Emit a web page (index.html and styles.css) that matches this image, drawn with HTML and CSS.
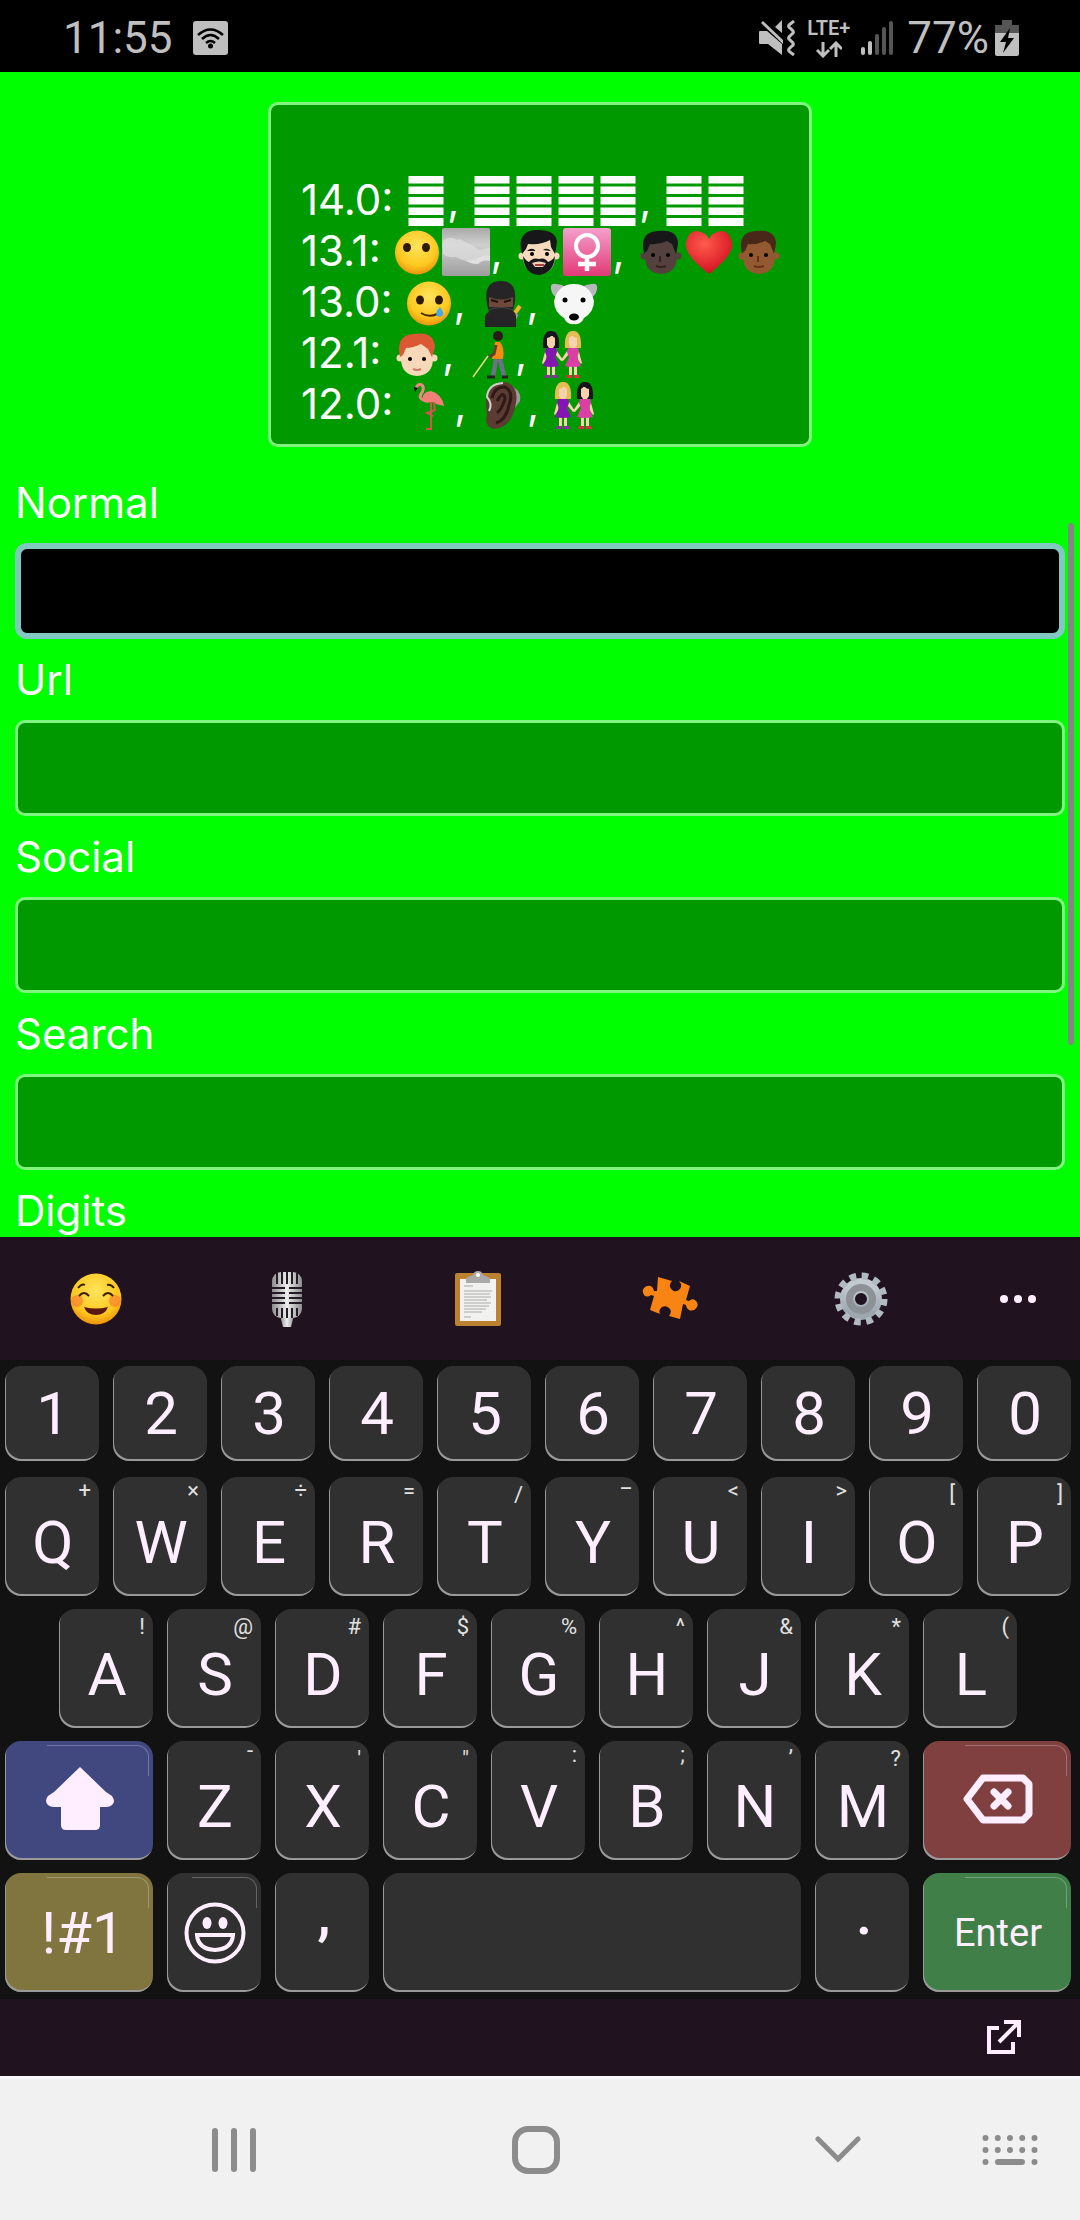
FILE: index.html
```html
<!DOCTYPE html>
<html lang="en">
<head>
<meta charset="utf-8">
<meta name="viewport" content="width=device-width, initial-scale=1">
<title>Keyboard test</title>
<link rel="stylesheet" href="styles.css">
</head>
<body>
<svg class="defs" aria-hidden="true">
  <defs>
    <radialGradient id="yellow" cx=".5" cy=".35" r=".65"><stop offset="0" stop-color="#ffe45c"/><stop offset=".7" stop-color="#fdc81f"/><stop offset="1" stop-color="#ec930c"/></radialGradient>
    <linearGradient id="cloud" x1="0" y1="0" x2="0" y2="1"><stop offset="0" stop-color="#a9a9a9"/><stop offset=".35" stop-color="#cfcfcf"/><stop offset="1" stop-color="#9d9d9d"/></linearGradient>
    <linearGradient id="pink" x1="0" y1="0" x2="0" y2="1"><stop offset="0" stop-color="#f3a0cd"/><stop offset="1" stop-color="#e23a76"/></linearGradient>
    <radialGradient id="red" cx=".4" cy=".3" r=".7"><stop offset="0" stop-color="#ff5b4c"/><stop offset="1" stop-color="#d51222"/></radialGradient>
    <linearGradient id="steel" x1="0" y1="0" x2="0" y2="1"><stop offset="0" stop-color="#c3cbd1"/><stop offset="1" stop-color="#9ba6ae"/></linearGradient>
    <linearGradient id="metal"><stop offset="0" stop-color="#8c8c8c"/><stop offset=".5" stop-color="#eee"/><stop offset="1" stop-color="#8c8c8c"/></linearGradient>
    <symbol id="tofu" viewBox="0 0 42 50"><path fill="#fff" d="M3.500 0h35v7.500h-35zM3.500 10.500h35V18h-35zM3.500 21h35v7.500h-35zM3.500 31.500h35V39h-35zM3.500 42h35v8h-35z"/></symbol>
    <symbol id="head" viewBox="0 0 49 49">
      <circle cx="8" cy="28" r="3.500" fill="currentColor"/><circle cx="42" cy="28" r="3.500" fill="currentColor"/>
      <path fill="currentColor" d="M9 20Q9 6 25 6t16 14v8q0 17-16 18Q9 45 9 28z"/>
    </symbol>
    <symbol id="girl-left" viewBox="0 0 24 49">
      <path fill="var(--hair)" d="M4 18Q3 1 12 1t8 17z"/>
      <path fill="#f6d3ae" d="M8 6h8v9l-2 3h-4l-2-3zM6 22l2 0-1 8-3 4-1-1zM18 21l6 9-2 1-6-7zM8 35h3v11H8zM13 35h3v11h-3z"/>
      <path fill="var(--hair)" d="M7 8q5 0 6-4 1 4 4 4V3L12 1 7 3z"/>
      <path fill="var(--dress)" d="M7 18h10l1 4-2 5 4 9q-8 2-16 0l4-9-2-5z"/>
      <path fill="var(--shoe)" d="M6 45h5v3H5zM13 45h5l1 3h-6z"/>
    </symbol>
  </defs>
</svg>

<div class="phone">
  <header class="status">
    <span class="clock">11:55</span>
    <svg class="wifi" width="35" height="34" viewBox="0 0 35 34"><rect width="35" height="34" rx="3" fill="#bfbfbf"/><g fill="none" stroke="#000" stroke-width="2.500"><path d="M5 14q12.500-11 25 0M9 18q8.500-8 17 0M13 22q4.500-4 9 0"/></g><circle cx="17.500" cy="25" r="2.500"/></svg>
    <span class="status-icons">
      <svg width="37" height="36" viewBox="0 0 37 36" fill="#bfbfbf"><path d="M1 11h7l15 13v11L9 24H1q-1 0-1-1V12q0-1 1-1zM16 7l7-7v13zM2 3l2-2 20 19v4z"/><path d="M35 1l-5 4q-1 2 1 3l3 3q1 2-1 3l-3 3q-1 2 1 3l3 3q1 2-1 3l-3 3q-1 2 1 3l4 3" fill="none" stroke="#bfbfbf" stroke-width="3"/></svg>
      <span class="network">
        <span>LTE+</span>
        <svg width="26" height="17" viewBox="0 0 26 17" fill="none" stroke="#bfbfbf" stroke-width="3"><path d="M7 1v13M1 9l6 6 6-6M20 16V3M14 8l6-6 6 6"/></svg>
      </span>
      <svg width="32" height="34" viewBox="0 0 32 34"><g fill="#bfbfbf"><rect y="26" width="4" height="8" rx="2"/><rect x="7" y="20" width="4" height="14" rx="2"/></g><g fill="#555"><rect x="14" y="13" width="4" height="21" rx="2"/><rect x="21" y="6" width="4" height="28" rx="2"/><rect x="28" width="4" height="34" rx="2"/></g></svg>
    </span>
    <span class="battery">77%</span>
    <svg width="24" height="36" viewBox="0 0 24 36"><path fill="#555" d="M7 0h10v5h7v8H0V5h7z"/><path fill="#bfbfbf" d="M0 13h24v21q0 2-2 2H2q-2 0-2-2z"/><path d="M15 8L5 22h6L8 33l11-15h-6z"/></svg>
  </header>

  <main class="page">
    <section class="versions">
      <p>14.0: <svg class="tofu"><use href="#tofu"/></svg>, <svg class="tofu"><use href="#tofu"/></svg><svg class="tofu"><use href="#tofu"/></svg><svg class="tofu"><use href="#tofu"/></svg><svg class="tofu"><use href="#tofu"/></svg>, <svg class="tofu"><use href="#tofu"/></svg><svg class="tofu"><use href="#tofu"/></svg></p>
      <p>13.1: <svg class="emoji" viewBox="0 0 49 49"><circle cx="24" cy="24.500" r="22" fill="url(#yellow)"/><ellipse cx="14" cy="19.500" rx="4" ry="4.500" fill="#2e1a00"/><ellipse cx="33" cy="19.500" rx="4" ry="4.500" fill="#2e1a00"/></svg><svg class="emoji" viewBox="0 0 49 49"><rect y="0" width="48" height="48" rx="2" fill="url(#cloud)"/><path fill="#dedede" d="M1 13q7-6 14-1 4-2 8 2 9 3 13 8 9-1 12-3v13q-10-1-15 4-12-4-20-7-7 1-12-3z" opacity=".75"/><path fill="#e0e0e0" d="M48 33q-7-2-12 3-8 0-13-4 10 1 13-2 6-3 12-2z"/></svg>, <svg class="emoji" viewBox="0 0 49 49"><use href="#head" color="#f5dabd"/><path fill="#17171a" d="M8 26Q2 4 21 2q21-1 22 12-1 7-2 12l-4-7-1-7q-8 5-22 4l-2 5zM9 28q3 5 6 6 4-5 10-3 6-2 9 3 5-2 7-6-1 17-16 19Q10 46 9 28zM13 23q4-4 8-1v1zM29 22q4-3 8 1z"/><path fill="#efd2b6" d="M18 35q7-3 14 0l-3 4h-8z"/><circle cx="18" cy="26" r="2"/><circle cx="33" cy="26" r="2"/><path d="M21 37h9" stroke="#a64040" stroke-width="2"/></svg><svg class="emoji" viewBox="0 0 49 49"><rect width="48" height="48" rx="3" fill="url(#pink)"/><circle cx="24" cy="18" r="11" fill="none" stroke="#fff" stroke-width="4"/><path stroke="#fff" stroke-width="4.500" d="M24 29v14M15 36h18"/></svg>, <svg class="emoji" viewBox="0 0 49 49"><use href="#head" color="#54413d"/><path fill="#17171a" d="M8 25Q3 4 22 3q20-2 20 13l-2 10-4-10-5-3q-8 4-17 3l-3 7z"/><circle cx="17" cy="27" r="2"/><circle cx="32" cy="27" r="2"/><path d="M24 28v6M20 38q5 2 10 0" stroke="#302220" stroke-width="2" fill="none"/></svg><svg class="emoji" viewBox="0 0 49 49"><path fill="url(#red)" d="M24 46Q-2 26 1 14 5 0 16 4q6 2 8 7 2-5 8-7 11-4 15 10 3 12-23 32z"/></svg><svg class="emoji" viewBox="0 0 49 49"><use href="#head" color="#935a32"/><path fill="#4a2819" d="M8 25Q3 4 22 3q20-2 20 13l-2 10-4-10-5-3q-8 4-17 3l-3 7z"/><circle cx="17" cy="27" r="2"/><circle cx="32" cy="27" r="2"/><path d="M24 28v6M20 38q5 2 10 0" stroke="#663316" stroke-width="2" fill="none"/></svg></p>
      <p>13.0: <svg class="emoji" viewBox="0 0 49 49"><circle cx="24" cy="24.500" r="22" fill="url(#yellow)"/><ellipse cx="15" cy="21" rx="4" ry="4.500" fill="#2e1a00"/><ellipse cx="34" cy="21" rx="4" ry="4.500" fill="#2e1a00"/><path d="M16 34q8 5 16 1" fill="none" stroke="#4a2900" stroke-width="2"/><path fill="#49a9e2" d="M35 28q-6 6-3 9 4 2 6-1 1-3-3-8z"/></svg>, <svg class="emoji" viewBox="0 0 49 49"><path stroke="#f2b32b" stroke-width="4" d="M38 34l5-7"/><path stroke="#999" stroke-width="4" d="M35 43l5-8"/><path fill="#262426" d="M8 48V38q1-4 4-5Q3 2 24 2q20 0 12 30 3 2 3 5v11z"/><path fill="#6e483a" d="M12 18q13 5 24 0v10H12z"/><path d="M14 21l7 2M27 23l7-2" stroke="#1c0f0c" stroke-width="2"/><path stroke="#444" d="M12 31q12-5 24 0" fill="none"/></svg>, <svg class="emoji" viewBox="0 0 49 49"><path fill="#b7b8bd" d="M1 10Q0 4 6 5q5 0 10 3L6 18Q2 16 1 10zM47 10q1-6-5-5-5 0-10 3l10 10q4-2 5-8z"/><path fill="#f6f6f6" d="M4 22Q8 5 24 5t20 17q0 11-10 17-3 7-10 6-7 1-10-6Q4 33 4 22z"/><circle cx="15" cy="21" r="2.500"/><circle cx="33" cy="21" r="2.500"/><ellipse cx="24" cy="38" rx="5" ry="3.500"/></svg></p>
      <p>12.1: <svg class="emoji" viewBox="0 0 49 49"><g transform="translate(-1)"><use href="#head" color="#f7d8b9"/><path fill="#dc5734" d="M8 27Q3 5 22 4q20-3 21 13l-3 10-4-8-7-5q-8 4-15 4l-3 7z"/><circle cx="18" cy="29" r="2"/><circle cx="32" cy="29" r="2"/><path d="M21 39q4 2 8 0" stroke="#c77b66" stroke-width="2" fill="none"/></g></svg>, <svg class="emoji" viewBox="0 0 49 49"><circle cx="32" cy="6" r="5" fill="#2a1b18"/><path fill="#f68b12" d="M29 12h5q5 6 3 17H26z"/><path fill="none" stroke="#63402f" stroke-width="3" d="M30 15l-2 9-5 3"/><path fill="none" stroke="#e4d98d" stroke-width="1.500" d="M22 26L7 47"/><path fill="none" stroke="#6c7187" stroke-width="4.500" d="M30 29l-3 17M34 29l4 17"/><path stroke="#222" stroke-width="3" d="M21 47h8M36 47h6"/></svg>, <svg class="emoji pair" viewBox="0 0 49 49"><use class="dark purple" href="#girl-left" x="0" width="24" height="49"/><g transform="translate(46) scale(-1 1)"><use class="blond magenta" href="#girl-left" width="24" height="49"/></g></svg></p>
      <p>12.0: <svg class="emoji" viewBox="0 0 49 49"><path fill="none" stroke="#e88a83" stroke-width="3" d="M11 8q1-6 6-4 3 4-1 9-3 5 5 7"/><path d="M9 6l4 1-3 4z"/><path fill="#f08078" d="M18 20q-2-9 8-10 11 3 13 15-9-2-12-4-7 2-9-1z"/><path fill="none" stroke="#ce5550" stroke-width="2" d="M26 21v27h-5M29 21l1 8-8 3 6 3"/></svg>, <svg class="emoji" viewBox="0 0 49 49"><path fill="#9a9a9a" d="M31 4q13 5 11 16l-5 7z"/><path fill="#5b3b32" d="M8 23Q7 1 27 1q14 3 11 21-4 25-22 26-10-2-7-14z"/><path fill="none" stroke="#2f1a17" stroke-width="3" d="M14 17q2-11 13-11 9 5 4 18-3 15-13 18M19 20q7-12 8-2-3 10-8 14"/><path fill="none" stroke="#cfcfcf" stroke-width="2" d="M25 2Q10 3 9 16q6 7 2 14"/></svg>, <svg class="emoji pair" viewBox="0 0 49 49"><use class="blond purple" href="#girl-left" x="0" width="24" height="49"/><g transform="translate(46) scale(-1 1)"><use class="dark magenta" href="#girl-left" width="24" height="49"/></g></svg></p>
    </section>
    <form class="fields">
      <label for="normal">Normal</label><input class="focused" id="normal" type="text">
      <label for="url">Url</label><input id="url" type="url">
      <label for="social">Social</label><input id="social" type="text">
      <label for="search">Search</label><input id="search" type="search">
      <label for="digits">Digits</label><input id="digits" type="text" inputmode="numeric">
    </form>
    <div class="scroll-thumb"></div>
  </main>

  <nav class="toolbar" aria-label="Keyboard tools">
    <button type="button" aria-label="Emoji"><svg width="56" height="56" viewBox="0 0 56 56"><circle cx="28" cy="28" r="25.500" fill="url(#yellow)"/><circle cx="9" cy="30" r="6" fill="#f9792f" opacity=".65"/><circle cx="47" cy="30" r="6" fill="#f9792f" opacity=".65"/><g fill="none" stroke="#3a2000" stroke-width="2"><path d="M11 25q5-6 10 0M35 25q5-6 10 0M10 17q4-5 7-3M39 14q4-1 7 3"/></g><path fill="#5a1712" d="M16 36q12 3 24 0-3 8-12 8t-12-8z"/></svg></button>
    <button type="button" aria-label="Voice input"><svg width="56" height="56" viewBox="0 0 56 56"><path fill="url(#metal)" d="M21 44h14l-3 12h-8z"/><rect x="13" y="1" width="30" height="46" rx="9" fill="url(#metal)"/><path stroke="#241a25" stroke-width="2" d="M18 2v11M23 1v12M28 1v12M33 1v12M38 2v11M13 17h13M30 17h13M13 22h13M30 22h13M13 27h13M30 27h13M13 32h13M30 32h13M18 37v8M23 37v10M28 37v10M33 37v10M38 37v8"/></svg></button>
    <button type="button" aria-label="Clipboard"><svg width="56" height="56" viewBox="0 0 56 56"><rect x="5" y="2" width="46" height="53" rx="2" fill="#bd8132"/><path fill="#f1f1ef" d="M10 8h36v42H10z"/><path stroke="#aaa" d="M14 15h9M14 20h28M14 23h26M14 26h27M14 29h23M14 32h27M14 35h25M14 38h22M14 41h18M14 46h7"/><path fill="#aaa" d="M16 12V7l7-3q1-4 5-4t5 4l7 3v5z"/><circle cx="28" cy="4" r="2" fill="#fff"/></svg></button>
    <button type="button" aria-label="Extensions"><svg width="56" height="56" viewBox="0 0 56 56"><path fill="#f88413" d="M16 6l14 4q-3 3-2 6 2 5 7 4 5-2 4-7l-2-3 11 5-4 14 3 1q3-3 6-1 4 3 2 7-3 5-8 3-3-2-3-5l-3-1-3 15-11-3q3-4 1-7-3-4-8-2-4 3-2 7l-10-4 4-14-3-1q-4 3-7 0-3-5 1-8 5-3 8 1l1 3h3z"/></svg></button>
    <button type="button" aria-label="Settings"><svg width="56" height="56" viewBox="0 0 56 56"><circle cx="28" cy="28" r="13.500" fill="none" stroke="url(#steel)" stroke-width="15"/><circle cx="28" cy="28" r="23" fill="none" stroke="#b1bac1" stroke-width="7" stroke-dasharray="6.500 5.543"/><circle cx="28" cy="28" r="11.500" fill="none" stroke="#8c9296" stroke-width="7"/></svg></button>
    <button type="button" aria-label="More"><svg width="36" height="8" viewBox="0 0 36 8" fill="#ffeeff"><circle cx="4" cy="4" r="4"/><circle cx="18" cy="4" r="4"/><circle cx="32" cy="4" r="4"/></svg></button>
  </nav>

  <section class="keyboard" aria-label="Keyboard">
    <div class="row numbers">
      <button type="button">1</button><button type="button">2</button><button type="button">3</button><button type="button">4</button><button type="button">5</button><button type="button">6</button><button type="button">7</button><button type="button">8</button><button type="button">9</button><button type="button">0</button>
    </div>
    <div class="row letters">
      <button type="button">Q<span class="hint high">+</span></button><button type="button">W<span class="hint high">×</span></button><button type="button">E<span class="hint high">÷</span></button><button type="button">R<span class="hint high">=</span></button><button type="button">T<span class="hint">/</span></button><button type="button">Y<span class="hint highest">_</span></button><button type="button">U<span class="hint high">&lt;</span></button><button type="button">I<span class="hint high">&gt;</span></button><button type="button">O<span class="hint">[</span></button><button type="button">P<span class="hint">]</span></button>
    </div>
    <div class="row letters home">
      <button type="button">A<span class="hint">!</span></button><button type="button">S<span class="hint">@</span></button><button type="button">D<span class="hint">#</span></button><button type="button">F<span class="hint">$</span></button><button type="button">G<span class="hint">%</span></button><button type="button">H<span class="hint">^</span></button><button type="button">J<span class="hint">&amp;</span></button><button type="button">K<span class="hint">*</span></button><button type="button">L<span class="hint">(</span></button>
    </div>
    <div class="row letters">
      <button type="button" class="wide shift corner" aria-label="Shift"><svg width="68" height="63" viewBox="0 0 68 63" fill="#ffeeff"><path d="M34 0l26 25 6 4q4 6 0 9-2 2-6 2h-6v18q0 5-5 5H20q-5 0-5-5V40H8q-4 0-6-2-4-4 0-9l6-4z"/></svg></button><button type="button">Z<span class="hint higher">-</span></button><button type="button">X<span class="hint">'</span></button><button type="button">C<span class="hint">"</span></button><button type="button">V<span class="hint high">:</span></button><button type="button">B<span class="hint high">;</span></button><button type="button">N<span class="hint highest">,</span></button><button type="button">M<span class="hint">?</span></button><button type="button" class="wide delete corner" aria-label="Delete"><svg width="70" height="50" viewBox="0 0 70 50" fill="none" stroke="#ffeeff" stroke-width="7" stroke-linejoin="round" stroke-linecap="round"><path d="M20 4h40l6 6v30l-6 6H20L4 25zM31 18l14 14M45 18L31 32"/></svg></button>
    </div>
    <div class="row">
      <button type="button" class="wide symbols corner">!#1</button><button type="button" class="corner" aria-label="Emoji"><svg width="62" height="62" viewBox="0 0 62 62" fill="#ffeeff"><circle cx="31" cy="31" r="28.500" fill="none" stroke="#ffeeff" stroke-width="4"/><ellipse cx="23" cy="21" rx="4.500" ry="6"/><ellipse cx="39" cy="21" rx="4.500" ry="6"/><path d="M13 33h36q-1 14-18 15Q14 47 13 33z" fill="none" stroke="#ffeeff" stroke-width="4"/></svg></button><button type="button" class="mark">,</button><button type="button" class="space" aria-label="Space"></button><button type="button" class="mark">.</button><button type="button" class="wide enter corner">Enter</button>
    </div>
  </section>

  <div class="strip">
    <button type="button" aria-label="Open app"><svg width="34" height="34" viewBox="0 0 34 34" fill="none" stroke="#ffeeff" stroke-width="4"><path d="M12 8H2v24h24V22M17 2h15v15M32 2L12 22"/></svg></button>
  </div>

  <nav class="system" aria-label="System">
    <div class="system-main">
      <button type="button" aria-label="Recents"><svg width="44" height="46" viewBox="0 0 44 46" fill="#8c8c8c"><rect y="1" width="6" height="44" rx="3"/><rect x="19" y="1" width="6" height="44" rx="3"/><rect x="38" y="1" width="6" height="44" rx="3"/></svg></button>
      <button type="button" aria-label="Home"><svg width="48" height="48" viewBox="0 0 48 48"><rect x="3" y="3" width="42" height="42" rx="13" fill="none" stroke="#8c8c8c" stroke-width="6"/></svg></button>
      <button type="button" aria-label="Hide keyboard"><svg width="46" height="28" viewBox="0 0 46 28"><path d="M3 3l20 20L43 3" fill="none" stroke="#8c8c8c" stroke-width="5" stroke-linecap="round"/></svg></button>
    </div>
    <button type="button" aria-label="Switch keyboard"><svg width="56" height="30" viewBox="0 0 56 30" fill="none" stroke="#8c8c8c" stroke-width="6" stroke-linecap="round"><path stroke-dasharray="0 12.250" d="M3.500 3h50M3.500 15h50"/><path d="M3.500 27h0M16 27h24M52.500 27h0"/></svg></button>
  </nav>
</div>
</body>
</html>
```
FILE: styles.css
```css
* { box-sizing: border-box; }

body { margin: 0; background: #f1f1f1; }

button {
  margin: 0;
  padding: 0;
  border: 0;
  background: none;
  font: inherit;
  color: inherit;
}

svg { display: block; }

.defs { position: absolute; width: 0; height: 0; }

.phone { display: flex; flex-direction: column; height: 100vh; }

/* Status bar */
.status {
  display: flex;
  align-items: center;
  height: 72px;
  padding: 4px 61px 0 63px;
  background: #000;
  color: #bfbfbf;
  font: 44px/52px Roboto, sans-serif;
}

.wifi { margin-left: 20px; }

.status-icons { display: flex; align-items: center; gap: 11px; margin-left: auto; }

.network {
  display: flex;
  flex-direction: column;
  align-items: center;
  gap: 3px;
  font-size: 20px;
  line-height: 20px;
  font-weight: 600;
}

.battery { margin: 0 6px 0 14px; }

/* Page with test fields */
.page {
  position: relative;
  flex: 1;
  min-height: 0;
  overflow: hidden;
  padding: 30px 15px 0;
  background: #00ff00;
  color: #fff;
  font: 42px/51px Inter, sans-serif;
}

.versions {
  width: 544px;
  max-width: 100%;
  margin: 0 auto 30px;
  padding: 69px 0 15px 30px;
  border: 3px solid #80f680;
  border-radius: 10px;
  background: #009900;
}

.versions p { margin: 0; white-space: nowrap; }

.emoji, .tofu { display: inline-block; margin: -4px 0; vertical-align: -7px; }
.emoji { width: 49px; height: 49px; }
.tofu { width: 42px; height: 50px; }

.dark { --hair: #17151c; }
.blond { --hair: #e4bd55; }
.purple { --dress: #8315b0; --shoe: #8b2fa0; }
.magenta { --dress: #db3fa5; --shoe: #d8333c; }

.fields { display: flex; flex-direction: column; gap: 15px; }

.fields input {
  flex: none;
  width: 100%;
  height: 96px;
  padding: 0 24px;
  border: 3px solid #80f680;
  border-radius: 10px;
  background: #009900;
  color: #fff;
  font: inherit;
  outline: 0;
  appearance: none;
}

.fields .focused { border: 6px solid #80c8c0; border-radius: 12px; background: #000; }

.scroll-thumb {
  position: absolute;
  top: 451px;
  right: 6px;
  width: 6px;
  height: 522px;
  border-radius: 3px;
  background: #858585;
}

/* Keyboard toolbar */
.toolbar {
  display: grid;
  grid-template-columns: repeat(5, 1fr) 123px;
  height: 123px;
  background: #20121f;
}

.toolbar button { display: grid; place-items: center; }

/* Keys */
.keyboard {
  display: flex;
  flex-direction: column;
  gap: 13px;
  padding: 6px 9px 7px 5px;
  background: #121212;
  color: #ffeeff;
  font: 60px/70px Roboto, sans-serif;
}

.row {
  display: grid;
  grid-template-columns: repeat(20, 1fr);
  column-gap: 14px;
  height: 119px;
}

.row button {
  position: relative;
  display: flex;
  align-items: center;
  justify-content: center;
  grid-column: span 2;
  padding-left: 2px;
  border-radius: 16px;
  background: #303030;
  box-shadow: inset 1px -2px 0 #999;
}

.numbers { height: 95px; margin-bottom: 3px; }
.letters button { padding-top: 13px; }
.home button:first-child { grid-column: 2 / span 2; }

.row .wide { grid-column: span 3; padding-top: 0; }
.row .space { grid-column: span 8; }
.row .shift { background: #40487f; }
.row .delete { background: #804040; }
.row .symbols { padding-left: 8px; background: #80743f; font-size: 58px; }
.row .enter { background: #408048; font-size: 38px; }
.row .mark { padding: 0 0 38px 4px; font-weight: 500; }
.shift svg, .delete svg { margin-bottom: 4px; }

.hint {
  position: absolute;
  top: 5px;
  right: 8px;
  color: #e0e0e0;
  font-size: 22px;
  line-height: 26px;
}

.high { top: 1px; }
.higher { top: -3px; }
.highest { top: -10px; }

.corner::after {
  content: "";
  position: absolute;
  top: 4px;
  right: 4px;
  width: 68%;
  height: 30px;
  border: solid rgba(255, 255, 255, .25);
  border-width: 1px 1px 0 0;
  border-top-right-radius: 12px;
}

/* Strip under the keys */
.strip {
  display: flex;
  align-items: center;
  justify-content: flex-end;
  height: 77px;
  padding: 0 59px 2px;
  background: #20121f;
}

/* System navigation */
.system {
  display: flex;
  align-items: center;
  height: 144px;
  padding: 1px 42px 0 212px;
  border-top: 3px solid #f9f9f9;
  background: #f1f1f1;
}

.system-main {
  display: flex;
  flex: 1;
  align-items: center;
  justify-content: space-between;
  margin-right: 121px;
}
```
